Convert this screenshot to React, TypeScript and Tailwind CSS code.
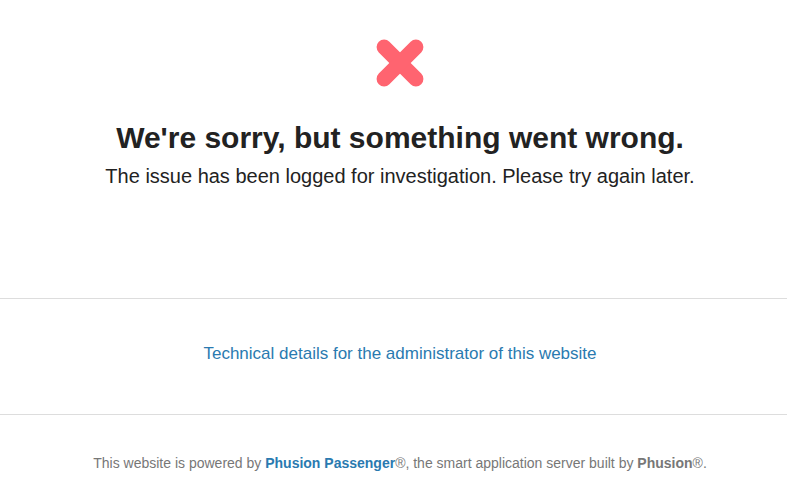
export default function App() {
  return (
    <div className="min-h-screen bg-white text-[#222] font-['Liberation_Sans',Arial,sans-serif]">
      <div className="flex h-[298px] flex-col items-center pl-[13px] pt-[38px]">
        <svg width="50" height="50" viewBox="0 0 50 50">
          <g fill="#ff6470">
            <rect x="-5" y="17.5" width="60" height="15" rx="7.5" transform="rotate(45 25 25)" />
            <rect x="-5" y="17.5" width="60" height="15" rx="7.5" transform="rotate(-45 25 25)" />
          </g>
        </svg>
        <h1 className="mt-[32px] text-[30px] font-bold leading-[36px]">
          We're sorry, but something went wrong.
        </h1>
        <p className="mt-[8px] text-[20px] leading-[24px]">
          The issue has been logged for investigation. Please try again later.
        </p>
      </div>
      <div className="flex h-[117px] items-center justify-center border-y border-[#dddddd] pb-[6px] pl-[13px]">
        <a href="#" className="text-[17px] text-[#2a7ab0]">
          Technical details for the administrator of this website
        </a>
      </div>
      <div className="flex justify-center pl-[13px] pt-[38px] text-[14px] text-[#777]">
        <p>
          This website is powered by <b className="text-[#2a7ab0]">Phusion Passenger</b>®, the smart application
          server built by <b>Phusion</b>®.
        </p>
      </div>
    </div>
  );
}
